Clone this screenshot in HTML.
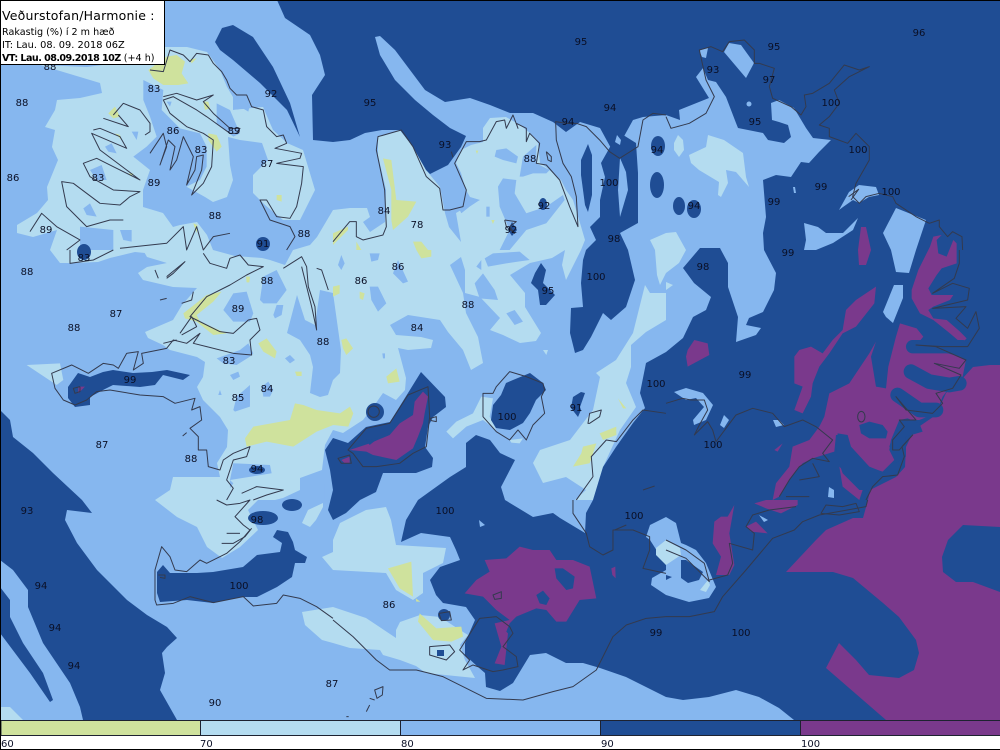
<!DOCTYPE html>
<html><head><meta charset="utf-8"><title>Veðurstofan</title>
<style>
html,body{margin:0;padding:0;background:#fff;width:1000px;height:750px;overflow:hidden}
svg{position:absolute;left:0;top:0;display:block}
text{font-family:"DejaVu Sans",sans-serif;font-size:10px;fill:#0a0f25;text-anchor:middle}
.l text{text-anchor:start}
.c *{fill:none;stroke:#333a4e;stroke-width:1;vector-effect:non-scaling-stroke;stroke-linejoin:round}
.L{fill:#b4dcf0}.B{fill:#86b7ef}.D{fill:#1f4d94}.P{fill:#7a398c}.Y{fill:#cfe29d}
.S{fill:none;stroke:#1f4d94;stroke-linejoin:round;stroke-linecap:round}
</style></head><body>
<svg width="1000" height="750" viewBox="0 0 1000 750" xmlns="http://www.w3.org/2000/svg">
<rect width="1000" height="750" fill="#fff"/>
<rect width="1000" height="720" fill="#86b7ef"/>

<!-- light layer -->
<g class="L">
<polygon points="87,67 40,65 100,83 102,93 80,98 57,100 55,110 45,127 55,130 52,147 58,160 47,187 48,200 37,213 17,225 17,233 33,237 57,230 50,250 60,263 70,263 98,262 110,258 135,252 145,253 167,263 200,263 213,250 207,235 197,222 180,225 173,227 163,213 143,207 143,190 150,170 150,157 167,170 187,187 205,197 213,202 227,197 233,180 230,165 228,137 240,140 262,140 272,130 263,107 253,108 233,110 233,97 227,87 220,70 207,52 187,47 165,47 140,60"/>
<polygon points="227,87 233,110 253,108 263,107 273,130 287,143 303,150 315,190 300,220 283,220 265,205 253,193 253,175 268,160 262,143 240,140 225,130"/>
<polygon points="317,237 333,210 350,208 367,208 370,217 363,222 370,232 385,222 386,190 378,155 378,137 400,130 413,147 426,170 440,187 445,213 449,227 461,242 456,213 473,203 480,200 470,197 466,190 461,173 456,163 461,150 471,145 483,142 483,128 490,118 506,117 520,125 530,133 538,143 540,163 546,167 561,180 566,190 573,200 580,223 585,240 581,250 572,268 566,280 562,265 565,250 552,258 530,263 510,275 525,293 525,307 541,333 536,341 520,343 503,335 490,330 500,318 480,297 465,293 465,270 461,257 450,265 463,293 466,313 478,337 483,363 471,370 463,350 448,332 440,320 408,315 390,325 396,335 421,337 433,340 431,348 408,350 398,348 406,378 405,390 396,400 383,393 376,403 363,420 343,433 333,430 325,445 322,470 300,478 300,490 283,498 275,500 258,500 248,510 258,530 240,547 222,558 207,547 197,527 177,517 155,500 170,490 173,477 220,477 217,463 227,447 228,430 220,417 203,400 197,387 203,377 205,362 197,357 170,350 163,345 148,338 145,332 173,320 182,305 197,288 173,287 143,280 138,273 147,267 167,263 147,257 143,250 200,250 205,250 213,250 235,256 262,258 270,260 285,265 293,250 310,245"/>
<polygon points="533,463 540,450 570,440 593,410 600,377 596,373 616,360 633,333 645,285 650,293 666,293 666,320 646,332 631,345 631,367 626,383 636,407 620,430 603,467 593,500 575,500 586,490 566,477 543,483"/>
<polygon points="655,250 650,240 666,233 676,232 686,250 679,263 666,273 660,285 657,275"/>
<polygon points="666,282 673,285 666,290"/>
<polygon points="689,155 706,147 708,135 724,140 743,153 746,177 749,187 736,172 726,170 728,183 721,197 718,195 719,182 699,170 691,163"/>
<polygon points="674,143 678,135 683,140 684,150 679,157 674,150"/>
<polygon points="333,540 340,523 366,510 386,507 391,520 396,545 446,548 443,563 423,573 423,593 413,600 396,590 386,573 333,570"/>
<polygon points="333,607 366,618 396,638 396,630 400,622 420,615 440,617 460,630 468,635 460,645 465,660 475,678 455,676 426,673 416,666 400,660 383,655 380,650 350,648 333,643 322,640 305,625 302,612"/>
<polygon points="322,557 333,552 333,570"/>
<polygon points="302,523 308,510 323,503 323,507 316,520 310,527"/>
<polygon points="0,707 10,707 23,720 0,720"/>
<g transform="translate(0,250) scale(.3333)"><polygon points="80,345 180,340 190,390 170,405"/></g>
<g transform="translate(333,250) scale(.3333)"><polygon points="340,545 370,515 420,490 445,440 480,445 470,500 490,540 450,510 400,530 360,565"/><polygon points="530,570 570,565 560,580 535,578"/><polygon points="630,300 645,300 640,315"/></g>
</g>

<!-- base holes -->
<g class="B">
<g transform="scale(.3333)">
<polygon points="430,240 490,270 485,330 540,385 600,400 620,440 620,500 600,540 560,560 450,510 400,470 440,440 470,410 450,350 430,300"/>
<polygon points="650,310 690,330 720,400 700,410 650,370"/>
<polygon points="720,320 750,315 745,335"/>
<polygon points="395,395 415,395 410,420"/><polygon points="315,440 335,430 350,460 325,455"/>
<polygon points="270,510 305,495 320,540 290,540"/><polygon points="250,625 270,610 290,650 260,645"/>
<polygon points="240,680 340,690 340,750 240,750"/><polygon points="360,690 395,690 395,725 370,720"/>
<polygon points="500,305 515,305 510,320"/>
</g>
<g transform="translate(333,0) scale(.3333)">
<polygon points="490,450 520,445 555,470 550,490 510,480 485,470"/>
<polygon points="560,530 570,470 610,435 610,490 650,510 640,520 600,520 570,530"/>
<polygon points="495,560 510,535 550,540 545,580 580,640 640,620 690,585 695,600 640,670 580,690 530,750 500,750 530,690 500,620"/>
<polygon points="460,620 470,620 470,650 460,650"/>
<polygon points="400,590 440,600 410,620 385,640 375,620"/>
</g>
<polygon points="287,333 300,340 310,355 313,367 310,393 320,397 328,395 333,380 340,373 341,350 333,293 320,290 315,325 305,320 297,295"/>
<g transform="translate(0,250) scale(.3333)">
<polygon points="670,180 700,130 740,125 760,190 750,215 700,215"/><polygon points="690,375 715,365 720,380 700,390"/>
<polygon points="700,480 710,440 750,405 750,470 705,485"/><polygon points="785,410 805,395 820,420 810,440 790,440"/>
<polygon points="820,195 830,165 850,165 845,195 825,205"/><polygon points="780,150 790,80 830,60 860,120 830,160 790,160"/>
<polygon points="855,325 870,315 885,330 870,340"/><polygon points="650,325 720,300 745,280 760,310 750,320 710,345 670,340"/>
<polygon points="700,640 810,645 815,670 690,690"/><polygon points="655,435 660,420 665,435"/>
<polygon points="690,690 700,700 690,715"/><polygon points="960,700 975,700 975,750 960,750"/>
</g>
<g transform="translate(333,250) scale(.3333)">
<polygon points="15,45 25,15 35,40 25,60"/><polygon points="110,10 140,10 135,30 115,35"/>
<polygon points="110,110 135,110 160,160 135,185 115,150"/><polygon points="180,70 195,30 225,95 210,100"/>
<polygon points="430,50 445,30 445,60"/><polygon points="425,100 450,70 485,120 495,150 440,145"/>
<polygon points="520,190 545,180 570,215 545,225"/><polygon points="455,25 480,10 560,5 590,30 555,35 520,40 465,50"/>
<polygon points="148,310 156,310 156,325 150,325"/>
</g>
<g transform="translate(333,500) scale(.3333)"><polygon points="245,330 255,325 258,345 245,345"/></g>
</g>

<!-- yellow -->
<g class="Y">
<g transform="scale(.3333)">
<polygon points="445,210 500,170 530,165 555,185 545,220 565,250 535,255 490,255 460,235"/><polygon points="570,178 590,175 575,190"/>
<polygon points="325,340 345,320 360,350 340,355"/><polygon points="610,305 625,305 630,325 615,330"/>
<polygon points="625,400 650,405 665,440 650,455 625,420"/><polygon points="830,585 845,585 845,605 830,600"/>
<polygon points="345,400 360,405 365,420"/><polygon points="385,520 400,520 395,530"/><polygon points="580,670 592,675 590,700"/>
</g>
<g transform="translate(333,0) scale(.3333)">
<polygon points="150,475 175,480 190,600 250,605 225,650 180,690 175,660 175,570"/><polygon points="0,700 45,680 45,690 0,735"/>
<polygon points="240,725 265,725 285,750 250,750"/><polygon points="70,725 85,750 70,750"/><polygon points="428,452 436,452 432,462"/><polygon points="475,660 485,660 480,672"/>
</g>
<g transform="translate(0,250) scale(.3333)">
<polygon points="550,190 620,135 665,125 640,155 590,195 600,215 680,250 640,255 590,215 555,205"/>
<polygon points="775,280 800,265 830,305 825,325 790,305"/><polygon points="885,365 905,365 905,378 890,378"/>
<polygon points="735,565 760,530 870,510 885,460 910,465 950,480 1020,490 1050,470 1060,490 1045,530 1000,525 950,545 880,590 800,575 740,590"/>
<polygon points="738,80 750,80 748,97 740,97"/>
</g>
<g transform="translate(333,250) scale(.3333)">
<polygon points="25,270 40,265 60,295 40,315 30,295"/><polygon points="160,380 190,355 200,395 165,400"/>
<polygon points="0,110 20,105 20,130 0,140"/><polygon points="80,125 95,130 90,150 80,145"/><polygon points="250,0 295,0 295,20 265,25"/>
<polygon points="855,445 880,475 870,475"/><polygon points="800,550 850,530 850,555 810,570"/>
<polygon points="720,650 745,610 750,590 790,580 770,640"/>
</g>
<g transform="translate(333,500) scale(.3333)">
<polygon points="165,205 235,185 240,290 200,265"/><polygon points="260,340 310,385 385,380 390,410 355,425 300,420 255,365"/><polygon points="248,295 262,305 250,305"/>
</g>
</g>

<!-- dark -->
<g class="D">
<polygon points="277,0 285,18 310,35 320,55 325,75 312,95 313,140 333,142 350,140 365,133 382,130 400,130 413,147 426,170 430,174 448,165 461,147 466,136 450,128 433,115 415,100 395,80 380,55 375,37 380,36 395,50 410,70 425,90 445,102 470,98 490,105 510,113 533,113 553,122 566,132 580,122 600,128 612,150 622,140 633,120 643,117 666,115 680,120 679,110 709,98 696,77 703,68 708,80 716,82 726,97 736,123 738,128 763,133 768,140 784,143 791,137 788,125 779,122 772,120 771,103 779,100 794,108 806,128 813,138 831,140 819,152 809,163 801,162 791,177 776,175 763,180 766,217 763,233 764,250 776,273 774,290 763,312 749,318 746,325 761,328 756,335 736,342 738,317 728,287 728,263 721,250 720,248 700,248 683,268 694,283 711,297 706,310 693,317 683,338 666,352 646,363 640,393 645,408 633,423 616,447 603,467 593,500 586,513 585,533 560,518 553,513 533,517 505,500 501,487 515,460 500,453 490,440 476,435 466,443 466,467 450,477 418,500 406,520 401,542 421,533 450,537 456,550 460,560 440,567 430,580 436,595 443,603 466,607 475,620 465,643 465,655 478,667 485,673 486,687 500,691 513,683 530,655 546,653 566,663 583,663 600,668 626,677 666,697 683,700 709,697 736,690 759,697 779,708 794,720 1000,720 1000,0"/>
<polygon points="610,147 601,163 605,177 600,200 600,217 590,227 596,240 586,250 583,260 581,283 583,307 571,308 570,333 575,353 583,350 591,337 603,313 611,320 626,307 635,280 628,250 620,233 638,223 638,173 636,143 620,133"/>
<polygon points="588,144 592,155 592,180 592,195 588,212 585,205 581,175 581,160"/>
<ellipse cx="658" cy="146" rx="7" ry="10"/>
<ellipse cx="657" cy="185" rx="7" ry="13"/><ellipse cx="679" cy="206" rx="6" ry="9"/><ellipse cx="694" cy="209" rx="7" ry="9"/>
<ellipse cx="543" cy="204" rx="4" ry="6"/><polygon points="512,222 517,230 512,236 508,230"/>
<polygon points="541,263 546,270 543,283 555,295 546,305 540,305 538,290 531,283 535,273"/>
<polygon points="581,392 585,393 580,407 581,410 578,417 571,408 573,397"/>
<polygon points="513,380 530,373 543,383 546,390 536,400 530,413 523,423 510,430 496,428 491,420 493,405 501,395 506,383"/>
<polygon points="421,372 445,397 446,407 433,417 428,427 425,447 433,458 432,467 416,473 383,473 376,492 360,500 346,513 333,520 328,510 333,490 330,470 325,450 333,438 348,443 366,427 390,422 408,393"/>
<circle cx="375" cy="412" r="9"/>
<polygon points="68,387 78,373 90,377 103,372 113,370 133,373 152,372 167,370 190,375 183,380 163,375 155,385 140,387 113,385 103,390 90,397 90,405 75,407 68,398"/>
<polygon points="0,410 10,420 13,437 33,453 53,473 82,500 92,513 67,510 65,520 77,543 97,570 127,600 147,615 167,627 177,638 167,647 162,653 165,673 160,690 177,720 83,720 80,707 70,683 43,643 28,607 28,590 13,570 0,560"/>
<polygon points="0,587 10,600 10,617 23,643 43,673 53,700 50,702 30,673 0,633"/>
<polygon points="157,572 163,565 170,573 197,573 213,572 243,567 257,555 280,552 282,543 273,537 277,530 288,532 293,542 295,550 307,557 305,563 295,563 292,577 277,587 257,597 240,597 213,603 187,600 160,602 157,593"/>
<ellipse cx="263" cy="518" rx="15" ry="7"/><ellipse cx="292" cy="505" rx="10" ry="6"/><ellipse cx="257" cy="470" rx="8" ry="4"/>
<circle cx="263" cy="244" r="7"/><ellipse cx="84" cy="252" rx="7" ry="8"/>
<polygon points="215,42 222,28 233,25 253,37 273,67 290,103 300,137 287,110 260,83 233,60 220,50"/>
<circle cx="444" cy="615" r="6"/>
<rect x="437" y="650" width="7" height="6"/>
</g>

<!-- holes over dark -->
<g class="B">
<polygon points="617,135 621,140 620,145 615,142"/>
<polygon points="620,158 626,172 628,190 620,217 618,190"/>
<polygon points="724,52 729,43 741,45 754,63 746,78"/>
<polygon points="699,50 708,48 706,58 702,57"/><circle cx="749" cy="104" r="2.5"/>
<polygon points="839,210 849,192 859,185 876,187 879,195 869,197 859,203 853,200 843,207"/>
<polygon points="804,223 818,227 826,233 843,233 858,218 853,230 833,243 816,250 804,250 806,240"/>
<polygon points="883,233 896,208 926,220 916,250 909,273 896,272 891,250"/>
<polygon points="793,187 795,187 796,193 794,193"/>
<polygon points="883,312 894,285 903,285 903,298 893,323 886,317"/>
<polygon points="674,392 686,388 703,393 713,405 706,420 694,425 693,420 704,407 696,398 686,400"/>
<polygon points="724,415 729,420 724,428 720,425"/>
<polygon points="773,420 779,420 784,425 776,427"/>
<polygon points="666,517 676,523 681,543 686,545 696,550 706,563 716,587 709,598 689,602 666,595 651,585 652,578 666,570 666,565 650,540 646,537 650,525"/>
<polygon points="479,520 485,525 480,527"/>
</g>
<g class="L">
<polygon points="666,540 680,548 681,555 666,565 656,555 656,548"/>
<polygon points="700,590 708,580 710,585 706,592"/>
</g>
<g class="D">
<polygon points="681,560 686,560 703,572 699,580 688,583 681,578"/><polygon points="666,575 672,577 666,580"/>
</g>

<!-- purple -->
<g class="P">
<polygon points="786,572 816,540 826,530 853,518 863,518 868,500 870,490 896,477 905,467 906,447 914,430 936,415 946,393 963,378 973,367 990,365 1000,365 1000,720 886,720 826,668 839,643 856,660 869,675 899,678 914,670 919,653 916,640 899,617 883,603 853,578 833,572"/>
<polygon points="861,227 866,227 871,250 866,265 859,265 858,250"/>
<g transform="translate(760,220) scale(.3333)">
<polygon points="520,50 545,45 530,60 535,100 560,110 580,60 590,70 590,130 545,145 530,165 505,205 515,225 580,225 570,240 520,260 505,270 520,295 560,300 600,335 620,355 605,370 570,340 520,300 480,280 455,235 455,210 475,150 510,80"/>
</g>
<g transform="translate(666,250) scale(.3333)">
<polygon points="65,300 85,270 125,280 130,315 65,350 60,320"/>
<polygon points="630,110 625,160 570,230 530,250 490,310 460,350 440,400 435,440 410,490 385,480 410,410 385,400 385,320 400,300 435,290 470,310 500,270 530,240 540,180 570,150"/>
<polygon points="702,220 752,235 772,260 752,285 882,320 900,330 890,380 860,400 830,440 810,490 760,510 720,510 680,560 670,590 695,620 650,665 600,650 550,590 525,555 510,555 505,605 440,625 410,640 370,690 340,740 320,750 330,700 370,650 380,590 430,570 460,530 475,500 490,430 550,400 610,310 630,275 615,320 630,410 660,415 667,350 690,260"/>
<polygon points="325,600 350,580 335,605"/><polygon points="520,650 590,720 580,750 530,710"/>
</g>
<g transform="translate(666,500) scale(.3333)">
<polygon points="145,65 165,50 185,50 205,15 190,100 205,195 190,225 150,225 165,170 140,130"/>
<polygon points="265,10 300,0 395,0 395,15 345,40 300,25"/><polygon points="240,80 270,65 305,100 255,95"/>
</g>
<g transform="translate(333,500) scale(.3333)">
<polygon points="455,180 520,175 560,140 600,150 650,150 670,180 720,180 770,200 790,295 740,300 700,365 670,365 640,330 610,325 550,350 530,370 520,395 525,400 515,495 485,490 505,440 485,370 530,360 490,330 450,290 395,280 430,240 470,215"/>
<polygon points="835,205 847,200 848,235 838,225"/>
</g>
<g transform="translate(333,250) scale(.3333)">
<polygon points="50,600 110,580 170,555 200,520 240,495 245,455 270,425 285,440 275,490 270,520 255,560 240,595 190,630 120,615 100,605"/>
<polygon points="25,630 50,620 50,640 35,640"/>
</g>
<g transform="translate(0,250) scale(.3333)"><polygon points="235,410 255,410 235,430"/></g>
</g>

<!-- dark over purple -->
<g class="D">
<g transform="translate(333,500) scale(.3333)">
<polygon points="665,205 690,205 725,230 720,265 700,270 670,235"/><polygon points="610,285 630,272 650,295 640,315 620,310"/>
</g>
<g transform="translate(333,250) scale(.3333)"><polygon points="100,570 135,565 110,585"/></g>
<g transform="translate(1000,527)"><polygon points="0,0 -37,-2 -52,13 -58,30 -57,45 -44,55 -27,55 0,65"/></g>
<g transform="translate(666,250) scale(.3333)">
<polygon points="580,525 610,515 650,525 665,545 660,565 610,565 585,550"/>
<polygon points="675,570 700,510 725,505 760,520 770,545 720,560 720,620 690,640 670,600"/>
<polygon points="515,550 545,555 555,590 610,650 660,670 600,720 580,720 530,670 510,610"/>
</g>
</g>
<g transform="translate(666,250) scale(.3333)">
<polyline class="S" stroke-width="40" points="740,290 830,290 890,290"/>
<polyline class="S" stroke-width="44" points="735,365 790,395 850,405 880,400"/>
<polyline class="S" stroke-width="44" points="695,435 760,480 810,480"/>
</g>

<!-- small base marks over purple -->
<g class="B"><polygon points="829,487 834,490 834,498 828,497"/><polygon points="759,515 768,520 764,522"/></g>

<!-- coastlines -->
<g class="c">
<g transform="scale(.3333)">
<polyline points="450,210 490,215 510,150 550,165 570,185 590,160 625,165 640,190 665,215 680,240 690,265 710,285 740,285 755,320 790,330 800,380 830,410 850,405 860,430 825,445 905,460 900,475 830,490 910,500 905,550 890,620 870,655 830,650 800,600 780,600 810,660 870,680 885,710 860,750"/>
<polyline points="490,290 530,280 590,300 640,285 610,305 640,340 690,385 720,385 710,400 690,400 620,350 590,330 520,290 490,300 510,340 560,380 610,400 640,420 635,500 610,550 575,585 605,510 610,465 590,470 585,510 560,555 580,470 550,410 530,480 510,510 525,440 505,420 480,495 500,440 490,400 450,460"/>
<polyline points="340,345 370,310 420,330 450,370 450,395 435,405"/>
<polyline points="310,355 385,380 355,345"/>
<polyline points="280,390 300,385 360,410 380,445 275,400 300,450 380,510 420,540 340,500 290,475 250,490 270,530 340,570 420,575 390,590 360,615 300,610 220,550 185,545 200,620 260,680 330,660 370,660"/>
<polyline points="90,695 125,640 170,680 240,720 200,750"/>
<polyline points="360,745 500,730 550,680 560,750 590,680 610,750 640,710 690,700"/>
</g>
<g transform="translate(333,0) scale(.3333)">
<polyline points="999,345 960,340 930,360 915,440 860,475 830,455 800,420 760,380 730,370 700,370 668,365 670,420 690,490 715,530 730,590 735,680 710,620 680,540 640,495 610,490 620,430 590,400 580,425 580,385 550,370 555,385 540,345 520,385 515,360 490,365 460,420 440,425 400,425 365,490 400,570 390,620 350,630 330,630 320,565 280,530 240,440 205,390 135,410 130,450 155,570 160,680 150,705 90,720 70,710 70,665 50,665 0,725"/>
<polyline points="355,455 360,472"/><polyline points="640,455 655,470 655,485 645,480 640,455"/>
<polyline points="515,660 550,665 530,680 545,700 520,680 515,660"/>
</g>
<g transform="translate(666,0) scale(.3333)">
<polyline points="890,750 888,710 860,695 845,710 820,680 820,660 790,670 750,650 690,610 680,590 640,580 600,590 580,610 560,590 570,550 610,480 610,440 570,400 545,430 490,410 490,385 460,375 490,350 520,310 505,270 550,230 610,200 580,210 535,195 490,250 440,280 415,285 420,320 405,345 375,320 320,295 310,260 325,205 280,190 265,190 265,150 235,120 190,125 170,155 135,140 100,150 120,240 145,290 120,340 70,370 15,385 0,350"/>
<polyline points="548,590 578,568 555,600"/>
</g>
<g transform="translate(0,250) scale(.3333)">
<polyline points="610,10 630,40 680,55 690,25 720,15 745,45 790,50 740,75 690,105 620,140 570,200 590,210 660,245 700,250 745,210 770,205 780,240 750,270 755,315 700,310 620,290 580,280 600,250 560,280 520,270 500,295 425,310 430,340 400,360 415,305 380,310 355,355 340,345 310,340 265,370 215,345 155,370 165,415 190,450 225,465 260,450 290,425 330,420 420,435 490,440 525,460 585,445 575,480 600,470 605,510 570,535 595,560 595,600 620,600 625,650 660,660 670,630 700,610 750,590 740,620 700,630 680,690 700,715 680,750"/>
<polyline points="850,55 905,20 920,50 925,110 945,170 950,240 935,170 920,110 905,50"/>
<polyline points="950,55 965,60 985,120"/>
<polyline points="210,0 210,40 280,30 340,0"/>
<polyline points="240,410 220,415 225,430 240,425 240,410"/>
<polyline points="725,730 770,710 850,720 800,735 760,750"/>
<polyline points="500,80 555,35 520,70 500,85"/><polyline points="545,160 575,150 580,125"/><polyline points="465,60 475,85"/>
<polyline points="480,150 500,145"/><polyline points="540,250 575,200 590,230 545,255"/><polyline points="490,280 530,270"/><polyline points="548,558 560,548"/>
</g>
<g transform="translate(0,500) scale(.3333)">
<polyline points="650,0 680,15 720,10 750,0 705,50 730,75 750,90 720,125 680,160 620,190 600,180 560,215 525,210 510,170 485,140 465,210 465,300 470,315 520,310 570,290 640,308 730,290 760,318 830,310 850,285 900,295 950,320 999,355"/>
<polyline points="665,130 700,130 735,110 755,85"/><polyline points="680,100 720,100"/>
<polyline points="475,225 495,225 495,235 480,232"/>
</g>
<g transform="translate(333,500) scale(.3333)">
<polyline points="0,360 60,410 130,480 170,510 250,510 330,530 400,565 460,595 570,600 660,575 720,560 790,510 840,410 880,375 940,355 999,350"/>
<polyline points="720,0 720,40 760,100 770,140 810,165 840,150 840,90 900,90 950,110 950,150 930,205 999,220"/>
<polygon points="380,450 440,355 490,350 530,380 540,400 510,440 550,470 555,500 510,510 480,515 420,495 390,510 410,480"/>
<polygon points="290,440 350,435 365,455 340,480 290,465"/><polygon points="318,340 350,335 355,360 325,362"/>
<polygon points="125,570 150,560 148,585 132,595"/><polyline points="110,595 125,600"/><polyline points="100,635 110,615"/><polyline points="40,650 47,650"/><polygon points="480,285 505,275 505,295 485,298"/>
<polyline points="845,90 880,75"/>
</g>
<g transform="translate(333,250) scale(.3333)">
<polygon points="490,410 530,365 580,380 630,400 635,420 625,440 635,490 600,525 580,570 555,540 530,570 490,545 450,500 450,430 480,430"/>
<polygon points="765,520 770,490 805,480 800,500 770,520"/>
<polygon points="15,625 50,615 55,640 25,640"/>
<polygon points="45,600 100,535 170,520 225,435 285,410 290,500 280,590 240,610 200,640 130,650 90,650 60,610"/>
<circle cx="122" cy="485" r="17"/><polygon points="292,505 310,500 310,515 295,512"/>
<polyline points="730,750 780,680 775,620 820,570 850,575 900,510 930,480 999,490"/>
<polyline points="930,720 965,708"/>
</g>
<g transform="translate(666,250) scale(.3333)">
<polyline points="0,460 50,445 75,450 115,450 125,480 100,525 85,555 110,530 125,515 140,540 150,575 210,495 260,475 320,490 355,530 410,510 450,530 500,570 470,610 490,635 440,625 400,650 370,690 340,740"/>
<polyline points="600,750 620,710 650,680 695,675 715,620 708,590 740,555 700,600 680,600 680,570 715,530 700,510 750,510 690,440 720,480 800,490 830,460 810,430 860,415 885,375 805,340 880,355 900,330 810,290 750,285 830,290 905,290 940,235 930,185 905,235 870,205 900,170 800,175 905,150 910,115 860,100 800,130 865,85 880,40 880,0"/>
<ellipse cx="586" cy="500" rx="11" ry="16"/>
<polyline points="400,690 460,680 440,640"/><polyline points="360,740 430,740"/>
</g>
<g transform="translate(666,500) scale(.3333)">
<polyline points="0,350 70,350 145,335 170,290 240,210 320,115 385,90 410,65 460,45 600,20 605,0"/>
<polygon points="465,40 480,15 530,20 570,10 580,35 520,45"/>
<polyline points="130,240 185,225 200,190 190,130 260,150 265,100 240,80 260,45 310,30 390,20"/>
<polyline points="0,120 60,150 115,190 130,245 90,205 60,175 0,150"/>
</g>
</g>

<!-- contour numbers -->
<g>
<text x="50" y="70">88</text><text x="581" y="45">95</text><text x="774" y="50">95</text><text x="919" y="36">96</text><text x="713" y="73">93</text><text x="769" y="83">97</text><text x="271" y="97">92</text><text x="370" y="106">95</text><text x="831" y="106">100</text><text x="154" y="92">83</text><text x="22" y="106">88</text><text x="568" y="125">94</text><text x="610" y="111">94</text><text x="755" y="125">95</text><text x="173" y="134">86</text><text x="234" y="134">89</text><text x="445" y="148">93</text><text x="201" y="153">83</text><text x="657" y="153">94</text><text x="858" y="153">100</text><text x="267" y="167">87</text><text x="530" y="162">88</text><text x="13" y="181">86</text><text x="98" y="181">83</text><text x="154" y="186">89</text><text x="609" y="186">100</text><text x="821" y="190">99</text><text x="891" y="195">100</text><text x="774" y="205">99</text><text x="544" y="209">92</text><text x="384" y="214">84</text><text x="215" y="219">88</text><text x="694" y="209">94</text><text x="417" y="228">78</text><text x="46" y="233">89</text><text x="511" y="233">92</text><text x="304" y="237">88</text><text x="263" y="247">91</text><text x="614" y="242">98</text><text x="788" y="256">99</text><text x="84" y="261">83</text><text x="703" y="270">98</text><text x="27" y="275">88</text><text x="398" y="270">86</text><text x="596" y="280">100</text><text x="267" y="284">88</text><text x="361" y="284">86</text><text x="548" y="294">95</text><text x="238" y="312">89</text><text x="468" y="308">88</text><text x="116" y="317">87</text><text x="74" y="331">88</text><text x="417" y="331">84</text><text x="323" y="345">88</text><text x="229" y="364">83</text><text x="745" y="378">99</text><text x="656" y="387">100</text><text x="130" y="383">99</text><text x="267" y="392">84</text><text x="238" y="401">85</text><text x="576" y="411">91</text><text x="507" y="420">100</text><text x="102" y="448">87</text><text x="713" y="448">100</text><text x="191" y="462">88</text><text x="257" y="472">94</text><text x="27" y="514">93</text><text x="445" y="514">100</text><text x="634" y="519">100</text><text x="257" y="523">98</text><text x="41" y="589">94</text><text x="239" y="589">100</text><text x="389" y="608">86</text><text x="55" y="631">94</text><text x="656" y="636">99</text><text x="741" y="636">100</text><text x="74" y="669">94</text><text x="332" y="687">87</text><text x="215" y="706">90</text>
</g>

<!-- legend -->
<rect x="1" y="720.5" width="999" height="15" fill="#86b7ef" stroke="#2a3040"/>
<rect x="1.5" y="721" width="199" height="14" fill="#cfe29d"/>
<rect x="201" y="721" width="199" height="14" fill="#b4dcf0"/>
<rect x="401" y="721" width="199" height="14" fill="#86b7ef"/>
<rect x="601" y="721" width="199" height="14" fill="#1f4d94"/>
<rect x="801" y="721" width="199" height="14" fill="#7a398c"/>
<path d="M200.5 720V736M400.5 720V736M600.5 720V736M800.5 720V736M0 720.5H1000M0 735.5H1000" stroke="#1d2230" fill="none"/>
<g class="l">
<text x="1" y="747">60</text><text x="200" y="747">70</text><text x="401" y="747">80</text><text x="601" y="747">90</text><text x="801" y="747">100</text>
</g>

<!-- frame -->
<path d="M0.5 750V0.5H1000M0 749.5H1000" stroke="#000" fill="none"/>

<!-- title box -->
<rect x="0.5" y="0.5" width="164" height="64" fill="#fff" stroke="#000"/>
<g class="l">
<text x="2" y="20" style="font-size:12.5px;letter-spacing:.2px;fill:#000">Veðurstofan/Harmonie :</text>
<text x="2" y="35" style="fill:#000;font-size:9.6px">Rakastig (%) í 2 m hæð</text>
<text x="2" y="48" style="fill:#000;font-size:9.8px">IT: Lau. 08. 09. 2018 06Z</text>
<text x="2" y="61" style="fill:#000;font-size:9.6px"><tspan style="font-weight:bold;letter-spacing:-.55px">VT: Lau. 08.09.2018 10Z</tspan> (+4 h)</text>
</g>
</svg>
</body></html>
